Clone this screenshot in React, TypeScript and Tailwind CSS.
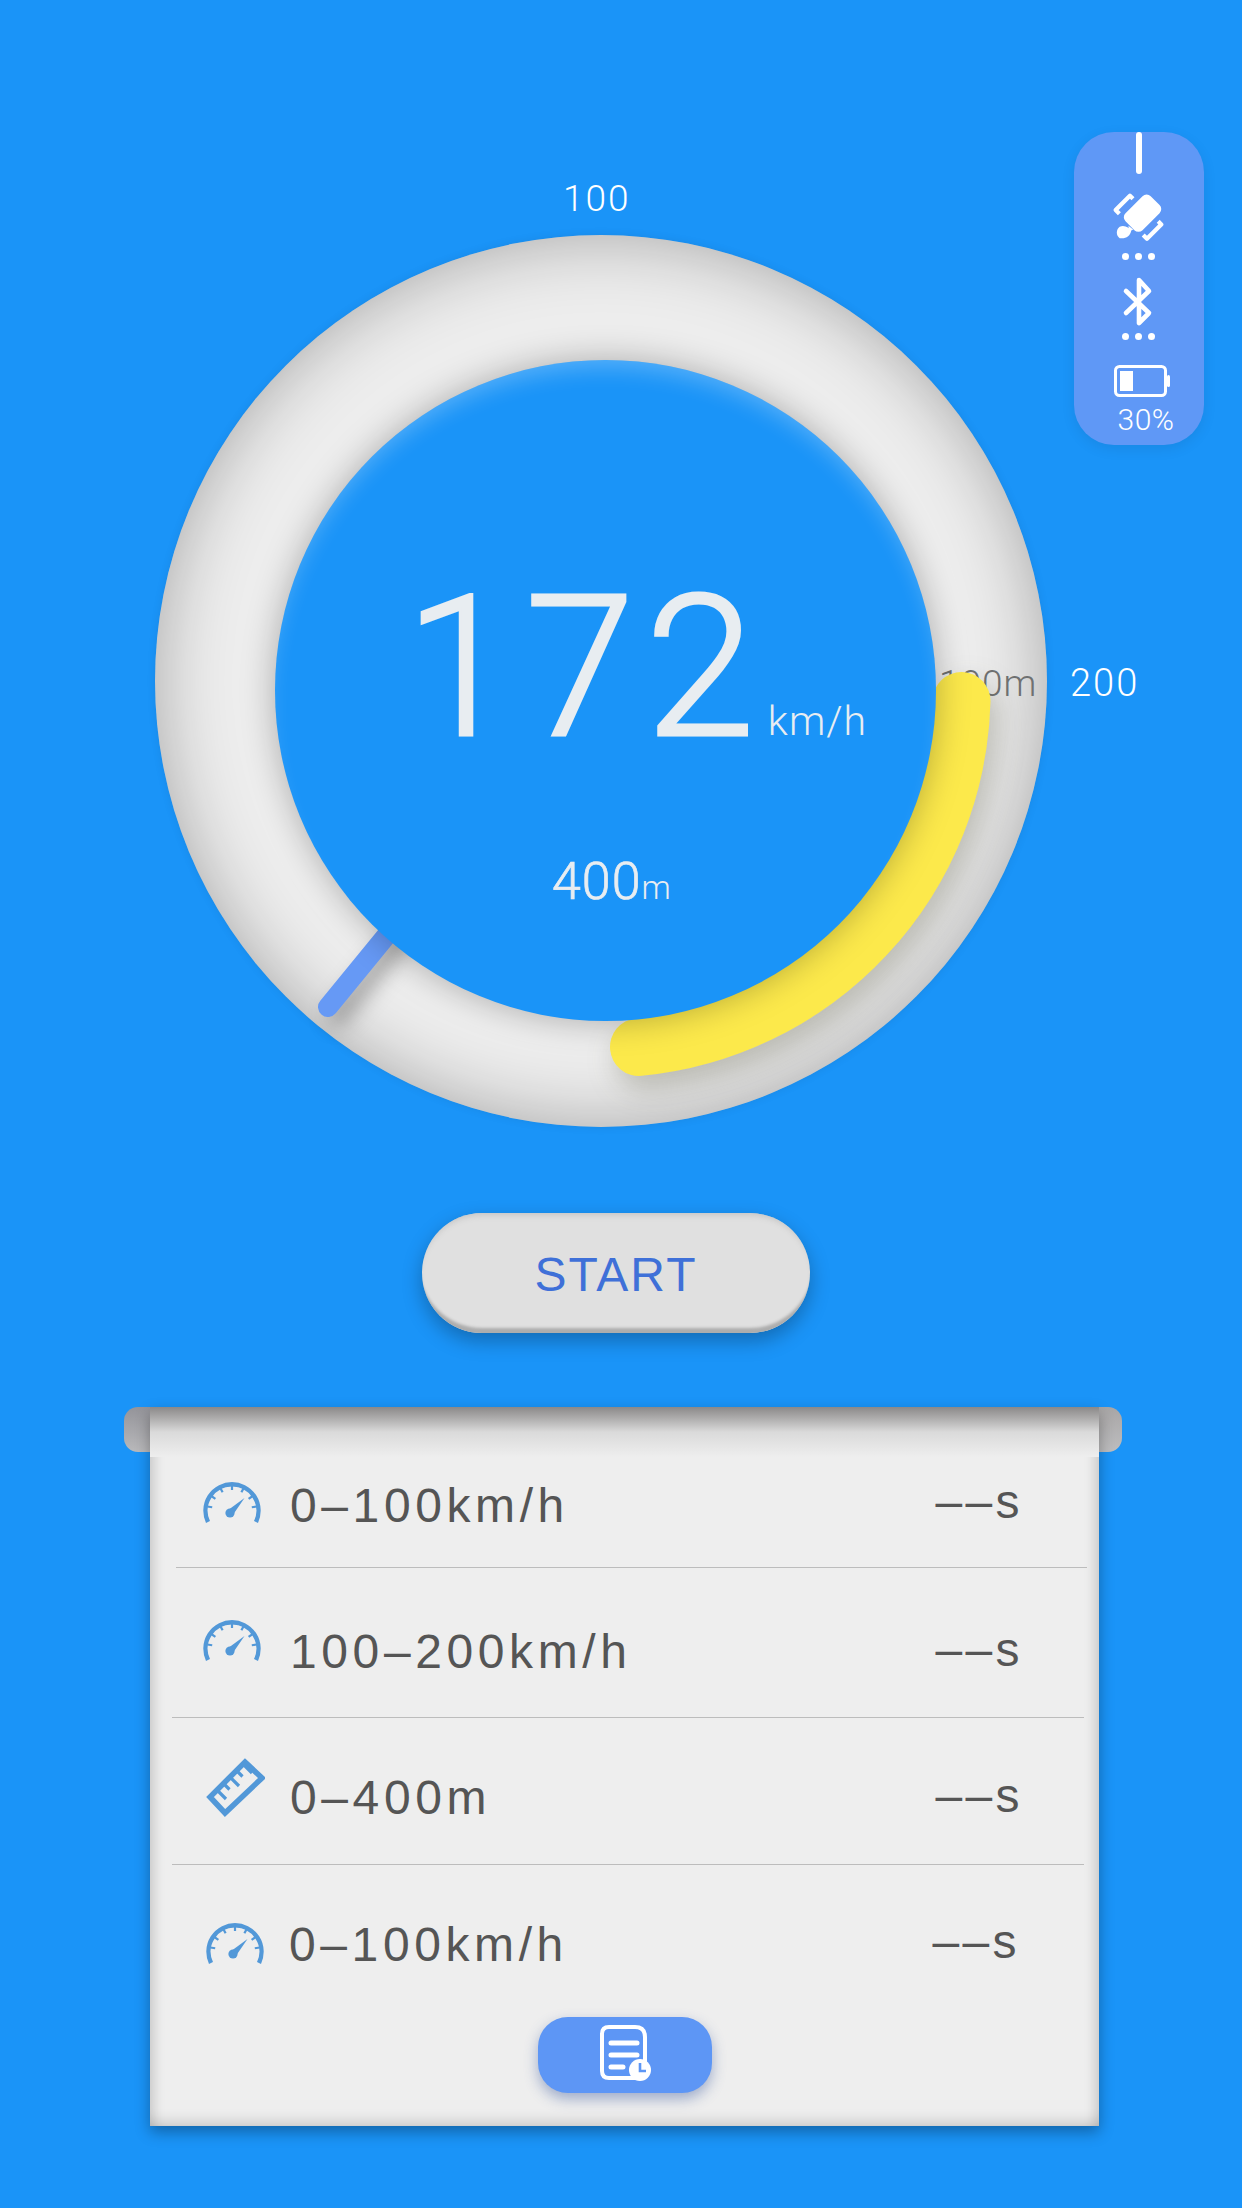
const rows = [
  { icon: 'gauge', label: '0–100km/h', box: 'h-[161px] pt-[37px] ml-[26px] mr-[12px] border-b', iconBox: 'ml-[26px] mb-[8px]', text: 'ml-[28px]', value: 'mr-[64px] mb-[8px]' },
  { icon: 'gauge', label: '100–200km/h', box: 'h-[150px] pt-[19px] ml-[22px] mr-[15px] border-b', iconBox: 'ml-[30px] mb-[25px]', text: 'ml-[28px]', value: 'mr-[61px] mb-[5px]' },
  { icon: 'ruler', label: '0–400m', box: 'h-[147px] pt-[14px] ml-[22px] mr-[15px] border-b', iconBox: 'ml-[33px] mb-[23px]', text: 'ml-[25px]', value: 'mr-[61px] mb-[5px]' },
  { icon: 'gauge', label: '0–100km/h', box: 'h-[152px] pt-[7px] ml-[22px] mr-[15px]', iconBox: 'ml-[33px] mb-[3px]', text: 'ml-[24px]', value: 'mr-[64px] mb-[5px]' },
];

const ticks = [-82, -56, -28, 0, 28, 56, 82];

const GaugeIcon = () => (
  <svg width="58" height="42" viewBox="0 0 58 42" fill="none" stroke="#5298d8">
    <path d="M5 41 A26.5 26.5 0 1 1 53 41" strokeWidth="4.4" strokeLinecap="butt" />
    {ticks.map((a) => (
      <line key={a} x1="29" y1="4" x2="29" y2="9" strokeWidth="2.2" transform={`rotate(${a} 29 29)`} />
    ))}
    <circle cx="27" cy="32" r="4.6" fill="#5298d8" stroke="none" />
    <path d="M24.5 29.5 L41.5 17 L29.5 34.5 Z" fill="#5298d8" stroke="none" />
  </svg>
);

const RulerIcon = () => (
  <svg width="60" height="60" viewBox="0 0 60 60" fill="none" stroke="#5298d8">
    <path d="M40 5 L57 21 L20 56 L5 40 Z" strokeWidth="5.5" strokeLinejoin="miter" />
    {[12, 18.5, 25, 31.5, 38].map((x, i) => (
      <line
        key={x}
        x1={x}
        y1={45 - x}
        x2={x + (i % 2 === 0 ? 9 : 6)}
        y2={45 - x + (i % 2 === 0 ? 9 : 6)}
        strokeWidth="3.2"
      />
    ))}
  </svg>
);

const Dots = () => (
  <div className="flex gap-[6px]">
    <span className="size-[7px] rounded-full bg-white" />
    <span className="size-[7px] rounded-full bg-white" />
    <span className="size-[7px] rounded-full bg-white" />
  </div>
);

const StatusPill = () => (
  <aside className="col-start-1 row-start-1 justify-self-end self-start mt-[132px] mr-[38px] w-[130px] h-[313px] rounded-[40px] bg-[#5f98f6] shadow-[0_4px_14px_rgba(0,0,0,0.08)] flex flex-col items-center">
    <span className="w-[6px] h-[42px] rounded-full bg-white" />
    <svg className="mt-[17px] -ml-[3px]" width="52" height="52" viewBox="0 0 52 54" fill="none">
      <g transform="rotate(-45 30 23)">
        <rect x="12" y="11" width="37" height="25" rx="6" fill="#fff" />
        <path d="M13 7 V1.5 H34 V6" stroke="#fff" strokeWidth="4.4" strokeLinejoin="round" />
        <path d="M15 40 V45.5 H36 V41" stroke="#fff" strokeWidth="4.4" strokeLinejoin="round" />
      </g>
      <path d="M7 37 C12 35 17 38 19 41 C18 47 13 50 7 49 C3 46 3 40 7 37 Z" fill="#fff" />
      <path d="M16 36 L21 40 L17 42 Z" fill="#fff" />
    </svg>
    <div className="mt-[10px] -ml-[1px]">
      <Dots />
    </div>
    <svg className="mt-[15px] -ml-[5px]" width="34" height="54" viewBox="0 0 34 54" fill="none" stroke="#fff" strokeWidth="4.6" strokeLinejoin="round" strokeLinecap="round">
      <path d="M6 16 L29 38 L19 48 V5 L29 16 L6 38" />
    </svg>
    <div className="mt-[4px] -ml-[1px]">
      <Dots />
    </div>
    <svg className="mt-[25px] ml-[5px]" width="56" height="32" viewBox="0 0 56 32" fill="none">
      <rect x="1.5" y="1.5" width="50" height="29" rx="4" stroke="#fff" strokeWidth="3" />
      <rect x="6" y="6" width="13" height="20" fill="#fff" />
      <rect x="53" y="10" width="3" height="12" rx="1.5" fill="#fff" />
    </svg>
    <span className="mt-[7px] ml-[14px] text-[30px] leading-[32px] font-light tracking-[0.5px] text-white font-['Roboto',sans-serif]">30%</span>
  </aside>
);

const Gauge = () => (
  <div className="col-start-1 row-start-1 relative mt-[235px] ml-[155px] size-[892px] rounded-full bg-[#ededed] shadow-[inset_0_0_72px_rgba(0,0,0,0.3),0_0_10px_rgba(0,0,0,0.08)] font-['Roboto',sans-serif]">
    <span className="absolute left-[408px] -top-[55px] text-[37px] leading-[37px] tracking-[2px] font-light text-white">100</span>
    <span className="absolute left-[915px] top-[430px] text-[38px] leading-[37px] tracking-[2px] font-light text-white">200</span>
    <span className="absolute left-[784px] top-[430px] text-[37px] leading-[37px] tracking-[1px] font-light text-[#6f7172]">100m</span>
    <svg className="absolute inset-0 overflow-visible" width="892" height="892" viewBox="0 0 892 892" fill="none">
      <line x1="245" y1="684" x2="173" y2="772" stroke="#6699f5" strokeWidth="20" strokeLinecap="round" className="drop-shadow-[10px_8px_10px_rgba(0,0,0,0.3)]" />
      <path d="M806.5 466 A357 357 0 0 1 484 812" stroke="#fce94b" strokeWidth="58" strokeLinecap="round" className="drop-shadow-[6px_12px_14px_rgba(70,70,40,0.28)]" />
    </svg>
    <div className="absolute left-[120px] top-[125px] size-[661px] rounded-full bg-[#1a94f8] shadow-[0_0_34px_rgba(0,0,0,0.28),inset_0_16px_22px_-8px_rgba(255,255,255,0.26)] text-[#e8edf1]">
      <div className="flex items-baseline pt-[209px] pl-[130px]">
        <span className="text-[197px] leading-[197px] font-light tracking-[11px] [-webkit-text-stroke:3px_#e8edf1]">172</span>
        <span className="ml-[2px] text-[41px] leading-[41px] font-light tracking-[1px]">km/h</span>
      </div>
      <div className="flex items-baseline pt-[90px] pl-[277px]">
        <span className="text-[52px] leading-[51px] font-light tracking-[1px] [-webkit-text-stroke:0.7px_#e8edf1]">400</span>
        <span className="text-[33px] leading-[33px] font-light">m</span>
      </div>
    </div>
  </div>
);

const App = () => {
  return (
    <main className="w-[1242px] h-[2208px] overflow-hidden bg-[#1a94f8] font-['Liberation_Sans',sans-serif]">
      <section className="grid">
        <Gauge />
        <StatusPill />
      </section>

      <button className="block mt-[86px] ml-[422px] w-[388px] h-[120px] rounded-full bg-[#e0e0e0] text-[48px] tracking-[2px] pt-[4px] text-[#3f70d8] shadow-[inset_0_-8px_3px_-3px_#adadad,inset_0_6px_6px_-4px_#c4c4c4,0_8px_20px_rgba(0,0,0,0.28)]">
        START
      </button>

      <section className="relative mt-[74px] ml-[150px] w-[949px] h-[719px]">
        <span className="absolute -left-[26px] top-0 w-[40px] h-[45px] rounded-l-[14px] bg-gradient-to-b from-[#94949a] to-[#b9b9bb]" />
        <span className="absolute -right-[23px] top-0 w-[40px] h-[45px] rounded-r-[14px] bg-gradient-to-b from-[#a8a6a6] to-[#bdbdbf]" />
        <div className="relative h-full bg-[#eeeeee] shadow-[inset_14px_0_12px_-10px_rgba(0,0,0,0.16),inset_-14px_0_12px_-10px_rgba(0,0,0,0.16),inset_0_-16px_14px_-12px_rgba(0,0,0,0.16),0_6px_14px_rgba(0,0,0,0.32)]">
          <div className="absolute inset-x-0 top-0 h-[50px] bg-gradient-to-b from-[#8b8989] via-[#dadada] to-[#eeeeee]" />
          {rows.map(({ icon, label, box, iconBox, text, value }) => (
            <div key={label + box} className={`relative flex items-center border-[#bcbcbc] ${box}`}>
              <div className={`w-[60px] flex justify-center ${iconBox}`}>
                {icon === 'ruler' ? <RulerIcon /> : <GaugeIcon />}
              </div>
              <span className={`text-[48px] leading-[54px] tracking-[4.6px] text-[#555555] ${text}`}>{label}</span>
              <span className={`ml-auto text-[48px] leading-[54px] tracking-[3.4px] text-[#555555] ${value}`}>––s</span>
            </div>
          ))}
          <button className="relative block mx-auto w-[174px] h-[76px] rounded-[30px] bg-[#5d96f5] shadow-[0_6px_14px_rgba(60,90,160,0.45)]">
            <svg className="ml-[61px]" width="54" height="60" viewBox="0 0 54 60" fill="none" stroke="#fff" strokeLinecap="round">
              <path d="M38 53 H10 Q3 53 3 46 V9 Q3 2 10 2 H36 Q46 2 46 12 V38" strokeWidth="4" />
              <path d="M12 18 H38 M12 30 H38 M12 42 H24" strokeWidth="5" />
              <circle cx="41" cy="45" r="11" fill="#fff" stroke="none" />
              <path d="M41 38 V46 H47" stroke="#5d96f5" strokeWidth="2.6" strokeLinecap="butt" />
            </svg>
          </button>
        </div>
      </section>
    </main>
  );
};

export default App;
